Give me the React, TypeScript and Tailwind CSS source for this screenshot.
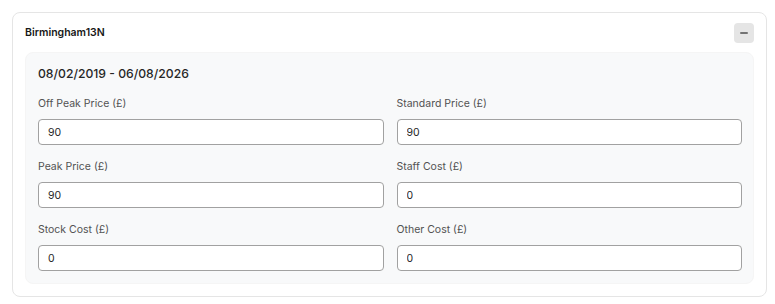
import { useState } from 'react';

type Field = { key: string; label: string };

const FIELDS: Field[] = [
  { key: 'offPeak', label: 'Off Peak Price (£)' },
  { key: 'standard', label: 'Standard Price (£)' },
  { key: 'peak', label: 'Peak Price (£)' },
  { key: 'staff', label: 'Staff Cost (£)' },
  { key: 'stock', label: 'Stock Cost (£)' },
  { key: 'other', label: 'Other Cost (£)' },
];

export default function App() {
  const [open, setOpen] = useState(true);
  const [values, setValues] = useState<Record<string, string>>({
    offPeak: '90',
    standard: '90',
    peak: '90',
    staff: '0',
    stock: '0',
    other: '0',
  });

  return (
    <div className="min-h-screen bg-white p-3 font-['Inter',sans-serif]">
      <div className="w-[755px] rounded-lg border border-neutral-200 bg-white px-3 pt-[10px] pb-3">
        {/* Header */}
        <div className="flex h-5 items-center justify-between">
          <h3 className="text-[10.5px] font-semibold text-neutral-900">Birmingham13N</h3>
          <button
            type="button"
            onClick={() => setOpen(!open)}
            className="flex h-5 w-5 items-center justify-center rounded bg-neutral-200"
          >
            <span className="block h-[2px] w-2 rounded bg-neutral-500"></span>
          </button>
        </div>

        {open && (
          <div className="mt-[9px] rounded-lg border border-neutral-100 bg-[#f8f9fa] pt-[13px] pr-[11px] pb-3 pl-3">
            <p className="mb-[14px] text-[12.2px] leading-4 font-medium text-neutral-800">
              08/02/2019 - 06/08/2026
            </p>

            <div className="grid grid-cols-2 gap-x-[13px] gap-y-[14px]">
              {FIELDS.map((f) => (
                <div key={f.key}>
                  <label htmlFor={f.key} className="mb-[7px] block text-[10.5px] leading-4 text-neutral-600">
                    {f.label}
                  </label>
                  <input
                    id={f.key}
                    type="text"
                    value={values[f.key]}
                    onChange={(e) => setValues({ ...values, [f.key]: e.target.value })}
                    className="block h-[26px] w-full rounded border border-neutral-400 bg-white px-[9px] text-[10.5px] text-neutral-800 focus:outline-none"
                  />
                </div>
              ))}
            </div>
          </div>
        )}
      </div>
    </div>
  );
}
